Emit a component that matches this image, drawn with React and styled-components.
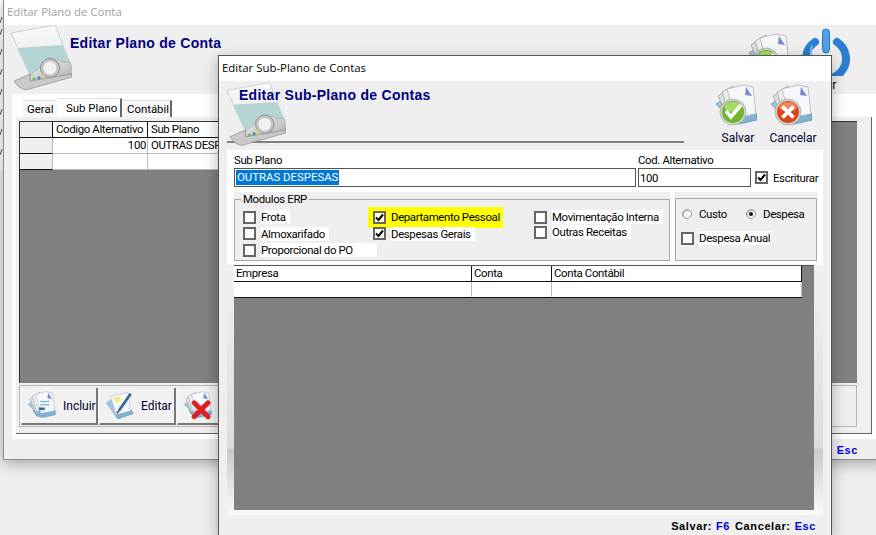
import React from 'react';
import styled, { createGlobalStyle } from 'styled-components';

const GlobalStyle = createGlobalStyle`
  html, body {
    margin: 0;
    padding: 0;
    background: #efefef;
    font-family: Roboto, "Liberation Sans", Arial, sans-serif;
    font-size: 11.4px;
    letter-spacing: -0.35px;
    color: #000;
  }
`;

const Desktop = styled.div`
  position: relative;
  width: 876px;
  height: 535px;
  overflow: hidden;
  background: #efefef;
`;

const Sliver = styled.svg`
  position: absolute;
  left: 0;
  top: 0;
`;

const Window = styled.div`
  position: absolute;
  left: ${(p) => p.$left}px;
  top: ${(p) => p.$top}px;
  width: ${(p) => p.$width}px;
  height: ${(p) => p.$height}px;
  box-sizing: border-box;
  display: flex;
  flex-direction: column;
  background: #efefef;
  border: 1px solid ${(p) => (p.$active ? '#555' : '#8a8a8a')};
  border-top-width: ${(p) => (p.$active ? 1 : 0)}px;
  box-shadow: 0 4px 14px rgba(0, 0, 0, 0.3);
`;

const TitleBar = styled.div`
  flex: none;
  height: 25px;
  box-sizing: border-box;
  display: flex;
  align-items: center;
  padding: 0 0 2px 3px;
  background: #fff;
  font-family: "Open Sans", "Noto Sans", sans-serif;
  font-size: 11.4px;
  letter-spacing: 0;
  color: ${(p) => (p.$active ? '#000' : '#a0a0a0')};
`;

const BackHeader = styled.div`
  flex: none;
  height: 69px;
  display: flex;
  padding-left: 6px;
`;

const HeaderTitle = styled.h1`
  margin: 0;
  font-family: "Liberation Sans", Arial, sans-serif;
  font-size: 14px;
  font-weight: bold;
  letter-spacing: 0.28px;
  color: #000080;
`;

const BackTitle = styled(HeaderTitle)`
  margin: 10px 0 0 -2px;
`;

const BackActions = styled.div`
  margin-left: auto;
  display: flex;
  gap: 12px;
  padding: 3px 32px 0 0;
`;

const Action = styled.div`
  width: ${(p) => p.$width || 46}px;
  padding-top: ${(p) => p.$drop || 0}px;
  display: flex;
  flex-direction: column;
  align-items: ${(p) => (p.$center ? 'center' : 'flex-start')};
`;

const ActionLabel = styled.span`
  align-self: center;
  margin-top: ${(p) => p.$gap ?? 3}px;
  white-space: nowrap;
  font-size: 12px;
  letter-spacing: 0;
  color: #000030;
`;

const BackPanel = styled.div`
  flex: none;
  height: 345px;
  box-sizing: border-box;
  margin: 0 6px 0 8px;
  padding: 4px 4px 6px;
  display: flex;
  flex-direction: column;
  background: #fff;
`;

const TabRow = styled.div`
  flex: none;
  height: 19px;
  display: flex;
  align-items: flex-end;
  padding-left: 7px;
`;

const Tab = styled.div`
  width: ${(p) => p.$width}px;
  height: ${(p) => (p.$active ? 19 : 17)}px;
  box-sizing: border-box;
  display: flex;
  align-items: center;
  padding-left: ${(p) => p.$padLeft}px;
  letter-spacing: 0;
  border-right: 2px solid ${(p) => (p.$edge ? '#666' : 'transparent')};
  border-top: 1px solid #ddd;
  background: ${(p) => (p.$active ? '#fff' : '#f7f7f7')};
`;

const TabPage = styled.div`
  flex: 1;
  display: flex;
  flex-direction: column;
  padding: 4px 14px 6px 3px;
  background: #efefef;
  border-right: 1px solid #666;
  border-bottom: 1px solid #666;
`;

const BackGrid = styled.div`
  flex: none;
  height: 262px;
  box-sizing: border-box;
  background: #808080;
  border-top: 1px solid #333;
  border-left: 1px solid #333;
`;

const BackTable = styled.div`
  display: grid;
  grid-template-columns: 33px 95px 640px;
  grid-auto-rows: 16px;
  width: 768px;
  background: #fff;
`;

const Cell = styled.div`
  box-sizing: border-box;
  padding: 0 ${(p) => (p.$right ? 1 : 3)}px 0 3px;
  line-height: 15px;
  white-space: nowrap;
  overflow: hidden;
  text-align: ${(p) => (p.$right ? 'right' : 'left')};
  background: ${(p) => (p.$fixed ? '#efefef' : 'transparent')};
  border-right: 1px solid ${(p) => (p.$head ? '#111' : '#bbb')};
  border-bottom: 1px solid ${(p) => (p.$head || p.$fixed ? '#111' : '#bbb')};
`;

const ButtonBar = styled.div`
  flex: none;
  height: 42px;
  box-sizing: border-box;
  margin-top: 2px;
  display: flex;
  gap: 1px;
  padding: 2px 1px 1px;
  border: 1px solid #b5b5b5;
`;

const BarButton = styled.div`
  width: 77px;
  box-sizing: border-box;
  display: flex;
  align-items: center;
  gap: 7px;
  padding-left: 5px;
  background: #f1f1f1;
  font-size: 12px;
  letter-spacing: 0;
  border-right: 2px solid #777;
  border-bottom: 2px solid #777;
  border-left: 1px solid #fff;
  color: #000030;
  white-space: nowrap;
  overflow: hidden;
`;

const Footer = styled.div`
  flex: 1;
  box-sizing: border-box;
  display: flex;
  justify-content: flex-end;
  align-items: center;
  gap: 4px;
  padding: 2px ${(p) => p.$right}px 0 0;
  font-family: "Liberation Sans", Arial, sans-serif;
  font-size: 11px;
  font-weight: bold;
  letter-spacing: 0.6px;
`;

const Key = styled.span`
  color: #0000e0;
  margin-right: 1px;
`;

const FrontHeader = styled.div`
  flex: none;
  height: 69px;
  display: flex;
  padding-left: 8px;
`;

const HeaderBand = styled.div`
  width: 457px;
  height: 62px;
  box-sizing: border-box;
  display: flex;
  border-bottom: 2px solid #808080;
`;

const FrontActions = styled.div`
  display: flex;
  gap: 9px;
  margin-left: 31px;
  padding-top: 3px;
`;

const FrontTitle = styled(HeaderTitle)`
  margin: 6px 0 0 -47px;
`;

const Panel = styled.div`
  flex: none;
  width: 596px;
  height: 365px;
  box-sizing: border-box;
  margin-left: 8px;
  padding: 3px 0 0 7px;
  background: linear-gradient(
    to bottom,
    #fff 0,
    #fff 114px,
    #f1f1f1 115px,
    #dcdcdc 298px,
    #c9c9c9 299px,
    #fbfbfb 100%
  );
`;

const FieldGrid = styled.div`
  display: grid;
  grid-template-columns: 402px 113px 1fr;
  column-gap: 2px;
  grid-template-rows: 15px 19px;
`;

const FieldLabel = styled.label`
  line-height: 14px;
  white-space: nowrap;
`;

const TextField = styled.div`
  box-sizing: border-box;
  height: 19px;
  display: flex;
  align-items: center;
  padding-left: 1px;
  background: #fff;
  border: 1px solid #555;
`;

const Selected = styled.span`
  padding: 0 1px;
  background: #0078d7;
  color: #fff;
  letter-spacing: 0;
  line-height: 15px;
`;

const GroupRow = styled.div`
  display: flex;
  gap: 5px;
  margin-top: 5px;
  width: 583px;
`;

const GroupCell = styled.div`
  background: #efefef;
  width: ${(p) => p.$width}px;
  height: 69px;
  flex: none;
`;

const Group = styled.fieldset`
  box-sizing: border-box;
  margin: 0;
  width: 100%;
  height: 69px;
  min-width: 0;
  display: grid;
  grid-template-columns: 125px 166px 1fr;
  padding: 4px 0 0 8px;
  border: 1px solid #a8a8a8;
`;

const Legend = styled.legend`
  margin-left: -2px;
  padding: 0 2px;
  line-height: 14px;
`;

const TypeBox = styled.div`
  box-sizing: border-box;
  margin-top: 6px;
  height: 63px;
  border: 1px solid #a8a8a8;
  padding: 8px 0 0 5px;
  display: flex;
  flex-direction: column;
  gap: 10px;
`;

const RadioRow = styled.div`
  display: flex;
  height: 14px;
  padding-left: 1px;
`;

const Column = styled.div`
  display: grid;
  grid-auto-rows: ${(p) => p.$row}px;
  padding-left: ${(p) => p.$indent || 0}px;
  justify-items: start;
`;

const Option = styled.div`
  display: flex;
  align-items: center;
  height: 14px;
  ${(p) =>
    p.$marked &&
    `
    background: #ffff00;
    padding: 3px 2px 4px 5px;
    margin: -3px 0 0 -5px;
  `}
`;

const SideOption = styled(Option)`
  height: 19px;
  padding-left: 2px;
`;

const Box = styled.span`
  flex: none;
  width: 13px;
  height: 13px;
  box-sizing: border-box;
  display: flex;
  align-items: center;
  justify-content: center;
  background: ${(p) => (p.$marked ? '#ffffd0' : '#fff')};
  border: 2px solid #666;
`;

const OptionText = styled.span`
  margin-left: 5px;
  padding-right: ${(p) => p.$fill || 4}px;
  line-height: 14px;
  white-space: nowrap;
  background: ${(p) => (p.$clear ? 'transparent' : '#fff')};
`;

const Radio = styled.span`
  flex: none;
  width: 10px;
  height: 10px;
  margin-top: 2px;
  box-sizing: border-box;
  display: flex;
  align-items: center;
  justify-content: center;
  border-radius: 50%;
  background: #f8f8f8;
  border: 1px solid #999;
  box-shadow: inset 1px 1px 1px #bbb;
  &::after {
    content: '';
    width: 4px;
    height: 4px;
    border-radius: 50%;
    background: ${(p) => (p.$on ? '#111' : 'transparent')};
  }
`;

const RadioText = styled.span`
  width: ${(p) => p.$width || 'auto'}px;
  margin-left: 7px;
  line-height: 14px;
`;

const LowerGrid = styled.div`
  margin-top: 4px;
  width: 580px;
  height: 245px;
  box-sizing: border-box;
  background: #808080;
  border-top: 1px solid #555;
`;

const LowerTable = styled.div`
  display: grid;
  grid-template-columns: 238px 80px 250px;
  grid-template-rows: 16px 15px;
  width: 568px;
  background: #fff;
  border-bottom: 1px solid #111;
`;

const LowerCell = styled(Cell)`
  padding-left: 2px;
  border-right-color: ${(p) => (p.$head ? '#111' : '#bbb')};
  border-bottom-color: ${(p) => (p.$head ? '#111' : 'transparent')};
`;

// drawn icons
const DeviceIcon = ({ front }) => (
  <svg
    width={front ? 60 : 62}
    height={front ? 66 : 67}
    viewBox="0 0 62 67"
    style={{ flex: 'none', marginLeft: front ? -1 : 0, marginTop: front ? 1 : 0 }}
  >
    <defs>
      <linearGradient id="devPage" x1="0" y1="0" x2="0" y2="1">
        <stop offset="0" stopColor="#fafafa" />
        <stop offset="1" stopColor="#e4e4e4" />
      </linearGradient>
      <linearGradient id="devBase" x1="0" y1="0" x2="1" y2="1">
        <stop offset="0" stopColor="#f4f4f4" />
        <stop offset="1" stopColor="#a9a9a9" />
      </linearGradient>
    </defs>
    <polygon points="1,8 45,0 61,40 20,50" fill="url(#devPage)" stroke="#b8b8b8" strokeWidth="0.6" />
    <polygon points="7,23 52,20 61,40 20,50" fill="#b6d3d3" />
    <path d="M20,50 L36,38 Q44,32 52,37 L60,37 Q63,44 62,50 L20,58 Z" fill="url(#devBase)" stroke="#9a9a9a" strokeWidth="0.5" />
    <path d="M4,56 L20,49 L20,56 L62,49 L62,52 L16,65 Q8,63 4,56 Z" fill="#c9c9c9" stroke="#7d7d7d" strokeWidth="0.6" />
    <circle cx="40" cy="43" r="9.5" fill="#c4c4c4" stroke="#8e8e8e" />
    <circle cx="40" cy="43" r="6.5" fill="#f2f2f2" />
    <circle cx="24" cy="54" r="1.7" fill="#6cc060" />
    <circle cx="29" cy="53" r="1.7" fill="#6a78c8" />
    <circle cx="33" cy="51" r="1.7" fill="#e5d25a" />
  </svg>
);

const DocStack = () => (
  <>
    <polygon points="1,20 10,14 28,34 20,40" fill="#9fc7df" stroke="#5f93b5" strokeWidth="0.7" />
    <polygon points="8,30 30,30 42,30 42,36 24,40 14,38" fill="#7fb3d4" stroke="#4a87ad" strokeWidth="0.7" />
    <polygon points="3,12 14,5 26,26 12,32" fill="#dedede" stroke="#9a9a9a" strokeWidth="0.7" />
    <polygon points="7,8 18,2 28,24 14,32" fill="#ececec" stroke="#9a9a9a" strokeWidth="0.7" />
    <polygon points="12,5 28,1 38,3 41,30 20,34" fill="#f6f7fb" stroke="#a6a6b5" strokeWidth="0.7" />
    <polygon points="31,3 37,12 30,11" fill="#7a88d0" />
  </>
);

const SaveIcon = ({ kind }) => {
  const good = kind === 'save';
  return (
    <svg width="42" height="44" viewBox="0 0 42 44">
      <DocStack />
      <circle cx="18" cy="28" r="13" fill="#d4d4d4" stroke="#9a9a9a" strokeWidth="0.6" />
      <circle cx="18" cy="28" r="11" fill={good ? '#6fb52c' : '#d9481c'} />
      <ellipse cx="18" cy="23" rx="8.5" ry="5" fill={good ? '#a8dc68' : '#ec8a5e'} />
      {good ? (
        <path d="M11,27 L16,33 L26,21" fill="none" stroke="#fff" strokeWidth="3.6" />
      ) : (
        <path d="M12.5,22.5 L23.5,33.5 M23.5,22.5 L12.5,33.5" fill="none" stroke="#fff" strokeWidth="3.8" />
      )}
    </svg>
  );
};

const PowerIcon = () => (
  <svg width="48" height="48" viewBox="0 0 48 48">
    <path d="M13,14 A20,20 0 1 0 35,14" fill="none" stroke="#2a7fd0" strokeWidth="8" strokeLinecap="round" />
    <path d="M10,18 A17,17 0 0 0 12,34" fill="none" stroke="#7fb8ea" strokeWidth="2" strokeLinecap="round" />
    <rect x="20.5" y="1" width="7" height="24" rx="3.5" fill="#4f9fe4" stroke="#2a78c4" />
  </svg>
);

const IncludeIcon = () => (
  <svg width="29" height="29" viewBox="0 0 42 44" style={{ flex: 'none' }}>
    <DocStack />
    <rect x="19" y="15" width="14" height="2" fill="#7fb3d4" />
    <rect x="19" y="20" width="14" height="2" fill="#7fb3d4" />
    <rect x="17" y="25" width="9" height="4" fill="#2d6f96" />
  </svg>
);

const EditIcon = () => (
  <svg width="29" height="29" viewBox="0 0 42 44" style={{ flex: 'none' }}>
    <polygon points="1,18 8,14 24,36 18,42" fill="#9fc7df" stroke="#5f93b5" strokeWidth="0.7" />
    <polygon points="16,36 38,28 42,34 20,42" fill="#7fb3d4" stroke="#4a87ad" strokeWidth="0.7" />
    <polygon points="7,8 34,2 38,30 16,36" fill="#f5f7fb" stroke="#a6a6b5" strokeWidth="0.7" />
    <polygon points="12,10 22,8 24,16 14,18" fill="#f4ec8c" />
    <path d="M20,30 L38,4" stroke="#2f6790" strokeWidth="4" />
    <path d="M20,30 L17,34" stroke="#222" strokeWidth="2" />
  </svg>
);

const DeleteIcon = () => (
  <svg width="29" height="29" viewBox="0 0 42 44" style={{ flex: 'none' }}>
    <DocStack />
    <path d="M16,18 L37,39 M37,18 L16,39" stroke="#e02020" strokeWidth="7.5" strokeLinecap="round" />
  </svg>
);

const Tick = () => (
  <svg width="9" height="9" viewBox="0 0 9 9">
    <path d="M1,4.5 L3.5,7 L8,1.5" fill="none" stroke="#000" strokeWidth="2" />
  </svg>
);

const Check = ({ on, marked, label, fill }) => (
  <Option $marked={marked}>
    <Box $marked={marked}>{on && <Tick />}</Box>
    <OptionText $clear={marked} $fill={fill}>{label}</OptionText>
  </Option>
);

const FooterKeys = ({ right }) => (
  <Footer $right={right}>
    <span>Salvar:</span>
    <Key>F6</Key>
    <span>Cancelar:</span>
    <Key>Esc</Key>
  </Footer>
);

const App = () => (
  <Desktop>
    <GlobalStyle />
    {/* edge of whatever window is behind, only slashes of its text show */}
    <Sliver width="3" height="170" viewBox="0 0 3 170">
      <rect width="3" height="170" fill="#fff" />
      {[20, 32, 52, 72, 92, 112, 132, 152].map((y) => (
        <path key={y} d={`M0,${y + 3} L2,${y - 3}`} stroke="#333" strokeWidth="0.8" />
      ))}
    </Sliver>

    <Window $left={3} $top={0} $width={880} $height={460}>
      <TitleBar>Editar Plano de Conta</TitleBar>
      <BackHeader>
        <DeviceIcon />
        <BackTitle>Editar Plano de Conta</BackTitle>
        <BackActions>
          <Action $width={42} $drop={5}>
            <SaveIcon kind="save" />
          </Action>
          <Action $width={48} $center>
            <PowerIcon />
            <ActionLabel $gap={2}>Sair</ActionLabel>
          </Action>
        </BackActions>
      </BackHeader>
      <BackPanel>
        <TabRow>
          <Tab $width={34} $padLeft={4}>Geral</Tab>
          <Tab $active $edge $width={65} $padLeft={9}>Sub Plano</Tab>
          <Tab $edge $width={50} $padLeft={5}>Contábil</Tab>
        </TabRow>
        <TabPage>
          <BackGrid>
            <BackTable>
              <Cell $fixed $head />
              <Cell $head>Codigo Alternativo</Cell>
              <Cell $head>Sub Plano</Cell>
              <Cell $fixed />
              <Cell $right>100</Cell>
              <Cell>OUTRAS DESPESAS</Cell>
              <Cell $fixed />
              <Cell />
              <Cell />
            </BackTable>
          </BackGrid>
          <ButtonBar>
            <BarButton><IncludeIcon />Incluir</BarButton>
            <BarButton><EditIcon />Editar</BarButton>
            <BarButton><DeleteIcon />Excluir</BarButton>
          </ButtonBar>
        </TabPage>
      </BackPanel>
      <FooterKeys right={23} />
    </Window>

    <Window $active $left={218} $top={55} $width={614} $height={481}>
      <TitleBar $active>Editar Sub-Plano de Contas</TitleBar>
      <FrontHeader>
        <HeaderBand>
          <DeviceIcon front />
          <FrontTitle>Editar Sub-Plano de Contas</FrontTitle>
        </HeaderBand>
        <FrontActions>
          <Action>
            <SaveIcon kind="save" />
            <ActionLabel $gap={3}>Salvar</ActionLabel>
          </Action>
          <Action>
            <SaveIcon kind="cancel" />
            <ActionLabel $gap={3}>Cancelar</ActionLabel>
          </Action>
        </FrontActions>
      </FrontHeader>
      <Panel>
        <FieldGrid>
          <FieldLabel>Sub Plano</FieldLabel>
          <FieldLabel>Cod. Alternativo</FieldLabel>
          <span />
          <TextField><Selected>OUTRAS DESPESAS</Selected></TextField>
          <TextField>100</TextField>
          <SideOption>
            <Box><Tick /></Box>
            <OptionText $fill={1}>Escriturar</OptionText>
          </SideOption>
        </FieldGrid>
        <GroupRow>
          <GroupCell $width={436}>
            <Group>
              <Legend>Modulos ERP</Legend>
              <Column $row={16.5}>
                <Check label="Frota" />
                <Check label="Almoxarifado" />
                <Check label="Proporcional do PO" fill={24} />
              </Column>
              <Column $row={16.5} $indent={5}>
                <Check on marked label="Departamento Pessoal" fill={1} />
                <Check on label="Despesas Gerais" />
              </Column>
              <Column $row={15}>
                <Check label="Movimentação Interna" />
                <Check label="Outras Receitas" />
              </Column>
            </Group>
          </GroupCell>
          <GroupCell $width={142}>
            <TypeBox>
              <RadioRow>
                <Radio />
                <RadioText $width={47}>Custo</RadioText>
                <Radio $on />
                <RadioText>Despesa</RadioText>
              </RadioRow>
              <Check label="Despesa Anual" fill={1} />
            </TypeBox>
          </GroupCell>
        </GroupRow>
        <LowerGrid>
          <LowerTable>
            <LowerCell $head>Empresa</LowerCell>
            <LowerCell $head>Conta</LowerCell>
            <LowerCell $head>Conta Contábil</LowerCell>
            <LowerCell />
            <LowerCell />
            <LowerCell />
          </LowerTable>
        </LowerGrid>
      </Panel>
      <FooterKeys right={14} />
    </Window>
  </Desktop>
);

export default App;
